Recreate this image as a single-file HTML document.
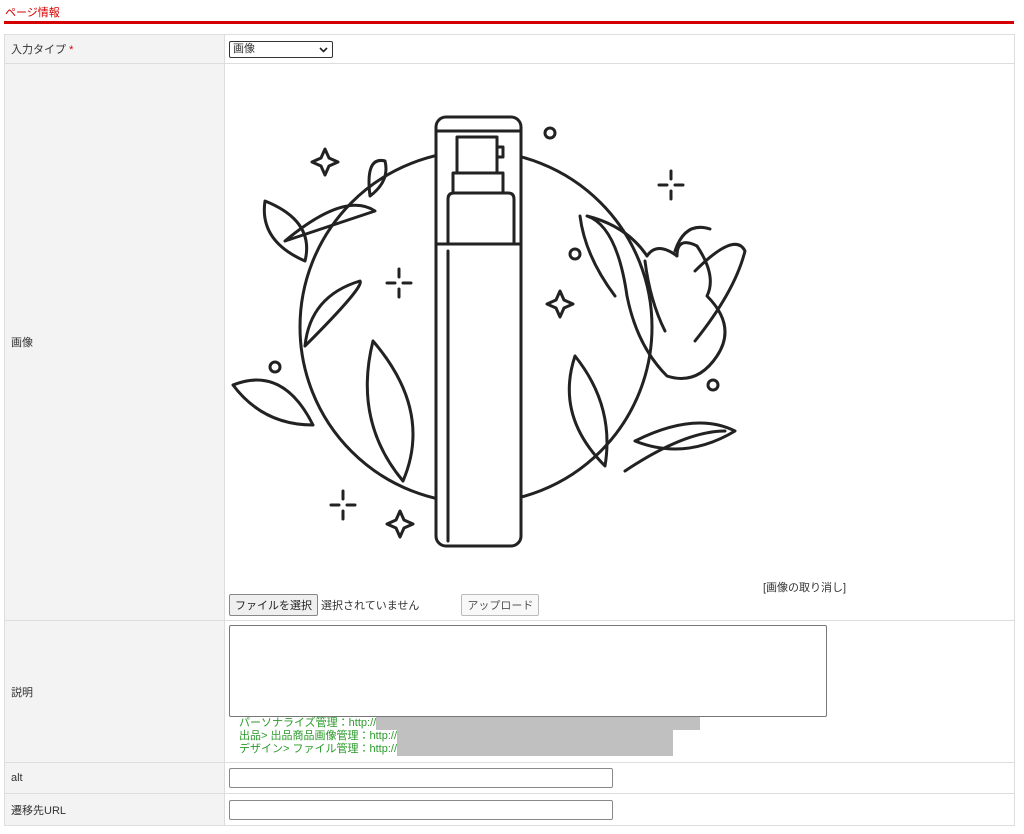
<!DOCTYPE html>
<html><head><meta charset="utf-8"><style>
body{margin:0;background:#fff;font-family:"Liberation Sans","Noto Sans CJK JP",sans-serif;font-size:11px;color:#333;}
.h{position:absolute;left:5px;top:4px;color:#d40000;font-size:11px;}
.bar{position:absolute;left:4px;top:21px;width:1010px;height:3px;background:#d40000;}
table{position:absolute;left:4px;top:34px;width:1011px;border-collapse:collapse;}
td{border:1px solid #ddd;padding:0 4px;vertical-align:middle;}
td.l{background:#f2f3f2;width:207px;padding:0 6px;}
.sel{display:inline-block;width:104px;height:17px;border:1px solid #333;border-radius:2px;box-sizing:border-box;font-size:11px;line-height:15px;padding-left:3px;position:relative;}
.inp{width:384px;height:20px;border:1px solid #888;border-radius:2px;box-sizing:border-box;}
.btn{display:inline-block;border:1px solid #888;background:#efefef;border-radius:2px;padding:2px 5px;font-size:11px;color:#222;}
.g{color:#2a9a2a;font-size:11px;line-height:13px;}
.gr{display:inline-block;background:#c0c0c0;height:13px;vertical-align:top;}
</style></head><body>
<div class="h">ページ情報</div><div class="bar"></div>
<table>
<tr style="height:29px"><td class="l">入力タイプ <span style="color:#d40000">*</span></td><td><span class="sel">画像<svg style="position:absolute;right:4px;top:5px" width="9" height="6"><path d="M1 1l3.5 3.5L8 1" stroke="#222" stroke-width="1.6" fill="none"/></svg></span></td></tr>
<tr style="height:557px"><td class="l">画像</td><td style="position:relative;vertical-align:top;padding:0">
<svg width="790" height="557" style="position:absolute;left:0;top:0" fill="none" stroke="#222" stroke-width="3" stroke-linecap="round" stroke-linejoin="round">
<g transform="translate(0,-63)">
<circle cx="251" cy="326" r="176" fill="#fff"/>
<rect x="211" y="116" width="85" height="429" rx="10" fill="#fff"/>
<path d="M211 130h85M211 243h85M223 243V198q0-6 6-6h54q6 0 6 6v45M228 192v-20h50v20M232 172v-36h40v36M272 146h6v10h-6M223 250v290M223 355v20"/>
<path d="M40 200q-6 40 40 60q10-40-40-60zM60 240q60-20 90-30q-30-20-90 30M160 160q-20-5-15 35q20-15 15-35M80 345q60-60 55-65q-50 15-55 65M148 340q-20 80 30 140q30-70-30-140M8 384q50-20 80 40q-50 0-80-40M350 355q-20 60 30 110q10-60-30-110M410 440q60-30 100-10q-50 30-100 10M400 470q60-40 100-40"/>
<path d="M362 215q30 10 40 80q10 50 40 80q30 10 50-20q20-30-10-60q10-20-10-50q-20-10-20 10q-20-15-30 0q-20-30-60-40zM420 260q5 40 20 70M450 250q10-30 35-22M470 270q40-40 50-20q-10 40-50 90M355 215q5 40 35 80"/>
<path d="M100 148l4 9 9 4-9 4-4 9-4-9-9-4 9-4zM335 290l4 9 9 4-9 4-4 9-4-9-9-4 9-4zM175 510l4 9 9 4-9 4-4 9-4-9-9-4 9-4z"/>
<path d="M446 170v8M446 190v8M434 184h8M450 184h8M174 268v8M174 288v8M162 282h8M178 282h8M118 490v8M118 510v8M106 504h8M122 504h8"/>
<circle cx="325" cy="132" r="5"/><circle cx="350" cy="253" r="5"/><circle cx="50" cy="366" r="5"/><circle cx="488" cy="384" r="5"/>
</g>
</svg>
<div style="position:absolute;left:538px;top:515px">[画像の取り消し]</div>
<div style="position:absolute;left:4px;top:530px"><span class="btn">ファイルを選択</span> 選択されていません<span class="btn" style="margin-left:42px;color:#555;background:#f8f8f8;border-color:#bbb">アップロード</span></div>
</td></tr>
<tr style="height:142px"><td class="l">説明</td><td style="vertical-align:top;padding-top:4px">
<div style="width:598px;height:92px;border:1px solid #777;border-radius:2px;box-sizing:border-box"></div>
<div class="g" style="margin-left:10px">パーソナライズ管理：http://<span class="gr" style="width:324px"></span></div>
<div class="g" style="margin-left:10px">出品> 出品商品画像管理：http://<span class="gr" style="width:276px"></span></div>
<div class="g" style="margin-left:10px">デザイン> ファイル管理：http://<span class="gr" style="width:276px"></span></div>
</td></tr>
<tr style="height:31px"><td class="l">alt</td><td><div class="inp"></div></td></tr>
<tr style="height:32px"><td class="l">遷移先URL</td><td><div class="inp"></div></td></tr>
</table>
</body></html>
